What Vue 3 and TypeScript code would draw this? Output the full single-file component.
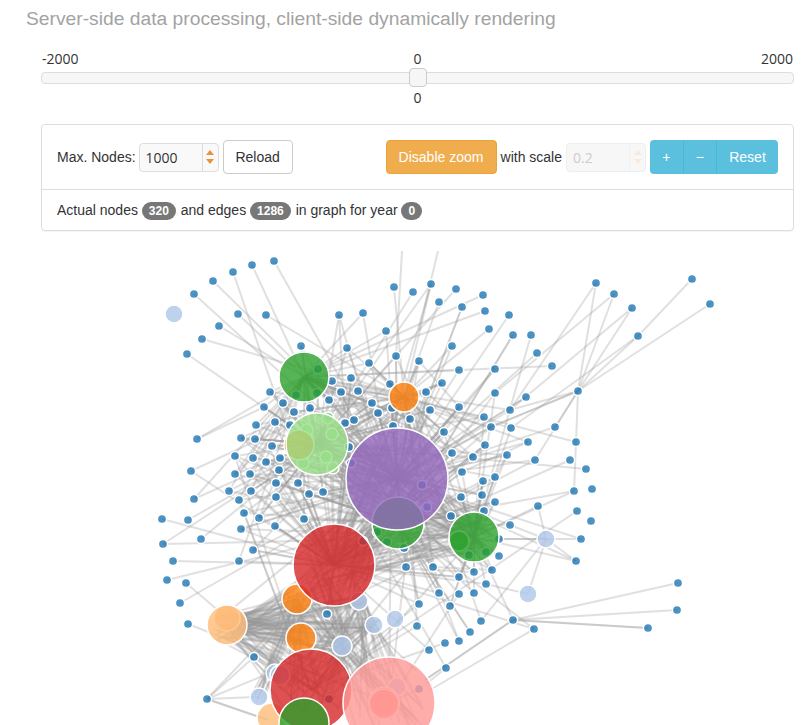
<script setup lang="ts">
import { ref } from 'vue'

type Pt = [number, number]
type Hub = [number, number, number, string]
type Edge = [number, number, number, number]

const C = {
  blue: '#1f77b4', light: '#aec7e8', orange: '#ff7f0e', peach: '#ffbb78', green: '#2ca02c',
  lime: '#98df8a', red: '#d62728', pink: '#ff9896', purple: '#9467bd',
}

const maxNodes = ref(1000)
const scale = ref(0.2)

const dots: Pt[] = [
  [274,261],[252,265],[233,272],[213,281],[194,294],[238,314],[266,315],[219,326],[202,339],[187,354],
  [301,346],[339,315],[363,313],[386,331],[347,348],[394,287],[413,292],[431,284],[439,302],[396,356],
  [419,361],[369,363],[351,378],[332,381],[270,392],[264,407],[283,403],[294,412],[310,408],[329,400],
  [341,392],[358,391],[372,403],[378,413],[392,408],[390,384],[426,392],[442,383],[430,410],[410,419],
  [393,426],[444,432],[354,420],[345,423],[329,417],[275,422],[256,425],[290,425],[241,438],[255,439],
  [197,439],[272,446],[235,456],[253,458],[266,462],[280,458],[279,470],[250,474],[235,474],[191,471],
  [276,483],[298,483],[229,491],[251,491],[349,447],[323,492],[456,289],[483,295],[462,307],[485,311],
  [509,315],[489,329],[513,335],[531,335],[452,346],[537,353],[459,370],[495,369],[552,366],[495,393],
  [526,397],[578,391],[459,407],[510,410],[484,417],[491,427],[511,428],[555,427],[576,442],[528,442],
  [485,445],[452,453],[473,457],[507,455],[535,460],[570,460],[586,469],[462,472],[483,481],[495,477],
  [574,491],[592,489],[596,283],[614,294],[632,308],[638,336],[692,279],[710,304],[194,499],[239,500],
  [276,497],[309,494],[244,513],[162,519],[188,520],[259,518],[304,519],[275,526],[241,529],[201,539],
  [163,544],[253,550],[173,561],[239,561],[167,580],[186,583],[180,603],[188,624],[327,614],[254,657],
  [207,699],[406,567],[433,567],[439,593],[419,604],[450,606],[417,626],[445,643],[429,650],[446,668],
  [538,506],[577,511],[591,521],[510,525],[495,502],[482,495],[461,497],[484,511],[451,516],[499,539],
  [499,556],[581,539],[576,561],[492,570],[474,572],[459,577],[486,584],[474,593],[459,594],[481,621],
  [470,632],[459,641],[513,620],[534,629],[678,583],[677,610],[648,628],
  // covered by the big circles, they show through
  [318,369],[296,395],[317,393],[351,463],[422,485],[427,507],[363,541],[377,532],[387,542],[404,548],
  [469,555],[486,552],[329,699],[419,689],
]

const ghosts: Hub[] = [
  [307,430,6,C.lime],[332,434,6,C.lime],[326,457,6,C.lime],[303,463,6,C.lime],[333,468,6,C.lime],[328,418,6,C.lime],
  [459,541,10,C.green],
]

const hubs: Hub[] = [
  [174,314,9,C.light],[546,539,9,C.light],[528,594,9,C.light],[359,601,9,C.light],[374,625,9,C.light],
  [395,619,9,C.light],[342,646,10,C.light],[259,697,9,C.light],[275,673,9,C.light],[280,675,10,C.light],
  [404,397,15,C.orange],[299,445,15,C.orange],[297,599,15,C.orange],[301,638,15,C.orange],
  [227,618,13,C.peach],[227,625,20,C.peach],[272,718,15,C.peach],
  [304,377,25,C.green],[398,523,26,C.green],[474,537,25,C.green],[317,444,31,C.lime],
  [397,479,51,C.purple],[334,565,41,C.red],[311,690,41,C.red],
  [397,687,9,C.light],[384,702,15,C.orange],[384,704,15,C.pink],[389,703,46,C.pink],[304,723,25,C.green],
]

// fixed edges where the reference shows a clear line in open space
const fixedEdges: Edge[] = [
  [402,251,396,356],[438,251,419,330],[431,284,392,420],
  [596,283,578,391],[614,294,578,391],[632,308,578,391],[638,336,578,391],[710,304,578,391],
  [692,279,638,336],[596,283,510,410],[614,294,495,393],[632,308,510,410],[638,336,511,428],
  [578,391,491,427],[578,391,491,427],[578,391,510,410],[578,391,576,442],[578,391,555,427],[578,391,535,460],
  [576,442,574,491],[513,620,678,583],[513,620,677,610],[513,620,648,628],[513,620,648,628],
  [513,620,425,680],[513,620,425,680],[534,629,430,690],[446,668,426,684],
  [207,699,254,657],[207,699,259,697],[207,699,265,675],[207,699,268,720],[207,699,268,720],
  [197,439,264,407],[546,539,581,539],[546,539,576,561],[546,539,499,539],[546,539,499,539],
  [546,539,510,525],[528,594,546,539],[528,594,486,584],[481,621,546,539],[546,539,538,506],
]

// small seeded generator so the tangle in the middle comes out the same every run
function mulberry(seed: number) {
  return () => {
    seed = (seed + 0x6d2b79f5) | 0
    let t = Math.imul(seed ^ (seed >>> 15), 1 | seed)
    t = (t + Math.imul(t ^ (t >>> 7), 61 | t)) ^ t
    return ((t ^ (t >>> 14)) >>> 0) / 4294967296
  }
}

function buildEdges(): Edge[] {
  const rnd = mulberry(1286)
  const out: Edge[] = [...fixedEdges]
  const targets: [number, number, number][] = [
    [397,479,6],[334,565,6],[311,690,1.5],[389,703,1.5],[317,444,4],[304,377,3],[398,523,4],[474,537,3],[404,397,2],
  ]
  const pick = (x: number, y: number): [number, number] => {
    const w = targets.map(t => t[2] / Math.pow(Math.hypot(t[0] - x, t[1] - y) + 30, 2))
    let v = rnd() * w.reduce((a, b) => a + b, 0)
    for (let i = 0; i < w.length; i++) {
      v -= w[i]
      if (v <= 0) return [targets[i][0], targets[i][1]]
    }
    return [targets[0][0], targets[0][1]]
  }
  for (const [x, y] of dots) {
    if (x > 590 || (x === 578 && y === 391)) continue
    const d = Math.hypot(x - 370, y - 480)
    const count = d < 90 ? 6 : d < 140 ? 4 : d < 170 ? 2 : rnd() < 0.2 ? 2 : 1
    for (let i = 0; i < count; i++) {
      const [tx, ty] = pick(x, y)
      out.push([x, y, tx, ty])
    }
  }
  // neighbouring dots also link up, this makes the criss-cross on the right side
  for (let i = 0; i < 130; i++) {
    const a = dots[Math.floor(rnd() * dots.length)]
    const b = dots[Math.floor(rnd() * dots.length)]
    if (a[0] > 590 || b[0] > 590 || Math.hypot(a[0] - b[0], a[1] - b[1]) > 110) continue
    if (Math.hypot(a[0] - 370, a[1] - 480) > 170) continue
    out.push([a[0], a[1], b[0], b[1]])
  }
  // dense bundles between the lower hubs
  const bundle = (a: Hub | number[], b: Hub | number[], n: number) => {
    for (let i = 0; i < n; i++) {
      const ja = Number(a[2]) * 0.75, jb = Number(b[2]) * 0.75
      out.push([
        Number(a[0]) + (rnd() - 0.5) * 2 * ja, Number(a[1]) + (rnd() - 0.5) * 2 * ja,
        Number(b[0]) + (rnd() - 0.5) * 2 * jb, Number(b[1]) + (rnd() - 0.5) * 2 * jb,
      ])
    }
  }
  const peach = [227,625,20], red1 = [334,565,41], red2 = [311,690,41], pink = [389,703,46]
  const org1 = [297,599,15], org2 = [301,638,15], lb1 = [374,625,9], lb2 = [342,646,10], lb3 = [359,601,9]
  bundle(peach, org1, 14); bundle(peach, org2, 14); bundle(peach, lb1, 14); bundle(peach, lb2, 16); bundle(peach, lb3, 14)
  bundle(peach, red1, 10); bundle(peach, red2, 22)
  bundle(red2, org1, 12); bundle(red2, lb3, 14); bundle(red2, lb1, 12); bundle(red1, lb2, 12); bundle(pink, lb3, 14)
  bundle(pink, org1, 14); bundle(pink, red1, 12); bundle(pink, [342,646,10], 8); bundle([259,697,9], org1, 12)
  bundle([397,479,51], [334,565,41], 50); bundle([317,444,31], [397,479,51], 45)
  bundle([404,397,15], [397,479,51], 14); bundle([474,537,25], [397,479,51], 30); bundle([474,537,25], [334,565,41], 25)
  return out
}

const edges = buildEdges()
</script>

<template>
  <div class="page">
    <h4 class="subtitle">Server-side data processing, client-side dynamically rendering</h4>

    <div class="slider">
      <div class="slider-scale">
        <span>-2000</span>
        <span>0</span>
        <span class="end">2000</span>
      </div>
      <div class="slider-track">
        <div class="slider-handle"></div>
      </div>
      <div class="slider-value">0</div>
    </div>

    <div class="panel">
      <div class="panel-body">
        <div class="group">
          <label class="field-label first">Max. Nodes:</label>
          <div class="spin">
            <input class="spin-input" :value="maxNodes" readonly />
            <div class="spin-arrows">
              <span class="arrow up"></span>
              <span class="arrow down"></span>
            </div>
          </div>
          <button class="btn">Reload</button>
        </div>
        <div class="group">
          <button class="btn btn-warning">Disable zoom</button>
          <span class="field-label">with scale</span>
          <div class="spin disabled">
            <input class="spin-input" :value="scale" disabled />
            <div class="spin-arrows">
              <span class="arrow up"></span>
              <span class="arrow down"></span>
            </div>
          </div>
          <div class="btn-group">
            <button class="btn-info narrow">+</button>
            <button class="btn-info narrow">−</button>
            <button class="btn-info reset">Reset</button>
          </div>
        </div>
      </div>
      <div class="panel-footer">
        Actual nodes <span class="badge">320</span> and edges <span class="badge">1286</span> in graph for year <span class="badge">0</span>
      </div>
    </div>

    <svg class="graph" viewBox="0 251 809 474" width="809" height="474">
      <g class="links">
        <line v-for="(e, i) in edges" :key="i" :x1="e[0]" :y1="e[1]" :x2="e[2]" :y2="e[3]" />
      </g>
      <g class="nodes">
        <circle v-for="(d, i) in dots" :key="i" :cx="d[0]" :cy="d[1]" r="4.6" :fill="C.blue" />
        <circle v-for="(g, i) in ghosts" :key="'g' + i" :cx="g[0]" :cy="g[1]" :r="g[2]" :fill="g[3]" />
        <circle v-for="(h, i) in hubs" :key="'h' + i" :cx="h[0]" :cy="h[1]" :r="h[2]" :fill="h[3]" />
      </g>
    </svg>
  </div>
</template>

<style scoped>
.page {
  width: 809px;
  height: 725px;
  overflow: hidden;
  font-family: "Liberation Sans", Arial, sans-serif;
  font-size: 14px;
  color: #333;
}

.subtitle {
  margin: 0;
  padding: 8px 0 0 26px;
  height: 32px;
  box-sizing: border-box;
  font-size: 19.25px;
  line-height: 22px;
  font-weight: 400;
  color: #a3a3a3;
  white-space: nowrap;
}

.slider {
  margin: 10px 15px 0 41px;
  font-family: "Open Sans", sans-serif;
  color: #333;
}

.slider-scale {
  display: grid;
  grid-template-columns: 1fr auto 1fr;
  height: 30px;
  line-height: 34px;
  padding: 0 1px;
}

.slider-scale .end {
  text-align: right;
}

.slider-track {
  position: relative;
  height: 12px;
  box-sizing: border-box;
  background: #f7f7f7;
  border: 1px solid #ddd;
  border-radius: 4px;
}

.slider-handle {
  position: absolute;
  top: -5px;
  left: 50%;
  width: 18px;
  height: 19px;
  margin-left: -9px;
  box-sizing: border-box;
  background: #f6f6f6;
  border: 1px solid #ccc;
  border-radius: 4px;
}

.slider-value {
  text-align: center;
  height: 28px;
  line-height: 28px;
}

.panel {
  margin: 12px 15px 0 41px;
  height: 107px;
  box-sizing: border-box;
  border: 1px solid #ddd;
  border-radius: 4px;
  box-shadow: 0 1px 1px rgba(0, 0, 0, 0.05);
}

.panel-body {
  height: 65px;
  box-sizing: border-box;
  display: flex;
  justify-content: space-between;
  align-items: center;
  padding: 0 15px;
  border-bottom: 1px solid #ddd;
}

.group {
  display: flex;
  align-items: center;
  gap: 4px;
}

.field-label {
  color: #333;
}

.field-label.first {
  margin-right: -1px;
}

.spin {
  display: flex;
  width: 80px;
  height: 29px;
  box-sizing: border-box;
  background: #f9f9f9;
  border: 1px solid #ddd;
  border-radius: 4px;
}

.spin-input {
  width: 62px;
  box-sizing: border-box;
  border: 0;
  outline: 0;
  padding: 1px 0 0 6px;
  background: transparent;
  font-family: "Open Sans", sans-serif;
  font-size: 14px;
  color: #333;
}

.spin-arrows {
  flex: 1;
  display: flex;
  flex-direction: column;
  align-items: center;
  justify-content: space-around;
  padding: 4px 0;
  border-left: 1px solid #ddd;
}

.arrow {
  width: 0;
  height: 0;
  border-left: 4px solid transparent;
  border-right: 4px solid transparent;
}

.arrow.up {
  border-bottom: 5px solid #e8923a;
}

.arrow.down {
  border-top: 5px solid #e8923a;
}

.spin.disabled {
  background: #f7f7f7;
  border-color: #eee;
}

.spin.disabled .spin-input {
  color: #ccc;
}

.spin.disabled .spin-arrows {
  border-left-color: #f0f0f0;
}

.spin.disabled .arrow.up {
  border-bottom-color: #fae8da;
}

.spin.disabled .arrow.down {
  border-top-color: #fae8da;
}

.btn {
  width: 70px;
  height: 34px;
  padding: 0;
  box-sizing: border-box;
  font: inherit;
  color: #333;
  background: #fff;
  border: 1px solid #ccc;
  border-radius: 4px;
}

.btn-warning {
  width: 111px;
  color: #fff;
  background: #f0ad4e;
  border-color: #eea236;
}

.btn-group {
  display: flex;
}

.btn-info {
  height: 34px;
  padding: 0;
  font: inherit;
  color: #fff;
  background: #5bc0de;
  border: 0;
  border-right: 1px solid #46b8da;
}

.btn-info.narrow {
  width: 33.5px;
}

.btn-info.narrow:first-child {
  border-radius: 4px 0 0 4px;
}

.btn-info.reset {
  width: 61px;
  border-right: 0;
  border-radius: 0 4px 4px 0;
}

.panel-footer {
  height: 41px;
  line-height: 41px;
  padding: 0 15px;
  white-space: nowrap;
}

.badge {
  display: inline-block;
  padding: 0 7px;
  height: 18px;
  line-height: 18px;
  margin-right: 1px;
  border-radius: 10px;
  background: #777;
  color: #fff;
  font-size: 12px;
  font-weight: 700;
}

.graph {
  display: block;
  margin-top: 20px;
}

.links line {
  stroke: #999;
  stroke-opacity: 0.3;
  stroke-width: 2;
}

.nodes circle {
  fill-opacity: 0.8;
  stroke: #fff;
  stroke-width: 1.5;
}
</style>

<style>
html, body {
  margin: 0;
  background: #fff;
  overflow: hidden;
}
</style>
